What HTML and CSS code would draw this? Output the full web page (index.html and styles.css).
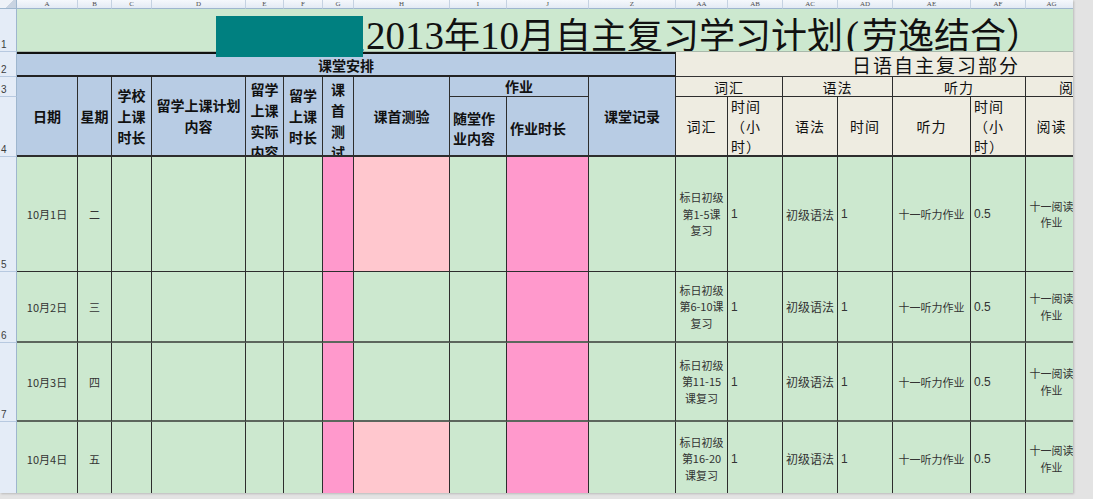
FILE: index.html
```html
<!DOCTYPE html>
<html lang="zh-CN">
<head>
<meta charset="utf-8">
<title>2013年10月自主复习学习计划</title>
<link rel="stylesheet" href="styles.css">
</head>
<body>
<div class="screen">
  <div class="sheet">
    <div class="grid">
      <!-- column headers -->
      <div class="corner"></div>
      <div class="ch">A</div><div class="ch">B</div><div class="ch">C</div><div class="ch">D</div>
      <div class="ch">E</div><div class="ch">F</div><div class="ch">G</div><div class="ch">H</div>
      <div class="ch">I</div><div class="ch">J</div><div class="ch">Z</div><div class="ch">AA</div>
      <div class="ch">AB</div><div class="ch">AC</div><div class="ch">AD</div><div class="ch">AE</div>
      <div class="ch">AF</div><div class="ch">AG</div>

      <!-- row 1 -->
      <div class="rh">1</div>
      <div class="title"><span class="title-text">某某学员<span class="num">2013</span>年<span class="num">10</span>月自主复习学习计划<span class="num paren">(</span>劳逸结合）</span></div>

      <!-- row 2 -->
      <div class="rh">2</div>
      <div class="sec-blue">课堂安排</div>
      <div class="sec-cream">日语自主复习部分</div>

      <!-- row 3 -->
      <div class="rh">3</div>
      <div class="hd rs2">日期</div>
      <div class="hd rs2">星期</div>
      <div class="hd rs2">学校<br>上课<br>时长</div>
      <div class="hd rs2">留学上课计划<br>内容</div>
      <div class="hd rs2 top">留学<br>上课<br>实际<br>内容</div>
      <div class="hd rs2">留学<br>上课<br>时长</div>
      <div class="hd rs2 top">课<br>首<br>测<br>试</div>
      <div class="hd rs2">课首测验</div>
      <div class="hd cs2 thin">作业</div>
      <div class="hd rs2">课堂记录</div>
      <div class="cr cs2">词汇</div>
      <div class="cr cs2">语法</div>
      <div class="cr cs2">听力</div>
      <div class="cr cut">阅读</div>

      <!-- row 4 -->
      <div class="rh">4</div>
      <div class="hd left">随堂作<br>业内容</div>
      <div class="hd left">作业时长</div>
      <div class="cr low">词汇</div>
      <div class="cr low left">时间<br>（小<br>时）</div>
      <div class="cr low">语法</div>
      <div class="cr low">时间</div>
      <div class="cr low">听力</div>
      <div class="cr low left">时间<br>（小<br>时）</div>
      <div class="cr low">阅读</div>

      <!-- row 5 -->
      <div class="rh">5</div>
      <div class="c">10月1日</div>
      <div class="c">二</div>
      <div class="c"></div>
      <div class="c"></div>
      <div class="c"></div>
      <div class="c"></div>
      <div class="c pink"></div>
      <div class="c lpink"></div>
      <div class="c"></div>
      <div class="c pink"></div>
      <div class="c"></div>
      <div class="c ml">标日初级<br>第1-5课<br>复习</div>
      <div class="c l">1</div>
      <div class="c l">初级语法</div>
      <div class="c l">1</div>
      <div class="c">十一听力作业</div>
      <div class="c l">0.5</div>
      <div class="c ml">十一阅读<br>作业</div>

      <!-- row 6 -->
      <div class="rh">6</div>
      <div class="c g">10月2日</div>
      <div class="c g">三</div>
      <div class="c g"></div>
      <div class="c g"></div>
      <div class="c g"></div>
      <div class="c g"></div>
      <div class="c g pink"></div>
      <div class="c g"></div>
      <div class="c g"></div>
      <div class="c g pink"></div>
      <div class="c g"></div>
      <div class="c g ml">标日初级<br>第6-10课<br>复习</div>
      <div class="c g l">1</div>
      <div class="c g l">初级语法</div>
      <div class="c g l">1</div>
      <div class="c g">十一听力作业</div>
      <div class="c g l">0.5</div>
      <div class="c g ml">十一阅读<br>作业</div>

      <!-- row 7 -->
      <div class="rh">7</div>
      <div class="c g">10月3日</div>
      <div class="c g">四</div>
      <div class="c g"></div>
      <div class="c g"></div>
      <div class="c g"></div>
      <div class="c g"></div>
      <div class="c g pink"></div>
      <div class="c g"></div>
      <div class="c g"></div>
      <div class="c g pink"></div>
      <div class="c g"></div>
      <div class="c g ml">标日初级<br>第11-15<br>课复习</div>
      <div class="c g l">1</div>
      <div class="c g l">初级语法</div>
      <div class="c g l">1</div>
      <div class="c g">十一听力作业</div>
      <div class="c g l">0.5</div>
      <div class="c g ml">十一阅读<br>作业</div>

      <!-- row 8 -->
      <div class="rh">8</div>
      <div class="c r8">10月4日</div>
      <div class="c r8">五</div>
      <div class="c r8"></div>
      <div class="c r8"></div>
      <div class="c r8"></div>
      <div class="c r8"></div>
      <div class="c r8 pink"></div>
      <div class="c r8 lpink"></div>
      <div class="c r8"></div>
      <div class="c r8 pink"></div>
      <div class="c r8"></div>
      <div class="c r8 ml">标日初级<br>第16-20<br>课复习</div>
      <div class="c r8 l">1</div>
      <div class="c r8 l">初级语法</div>
      <div class="c r8 l">1</div>
      <div class="c r8">十一听力作业</div>
      <div class="c r8 l">0.5</div>
      <div class="c r8 ml">十一阅读<br>作业</div>
    </div>
  </div>
  <div class="redact"></div>
</div>
</body>
</html>
```

FILE: styles.css
```css
html, body {
  margin: 0;
  padding: 0;
  background: #e3e3e3;
}

.screen {
  position: relative;
  width: 1093px;
  height: 499px;
  overflow: hidden;
  background: #e3e3e3;
  font-family: "Noto Sans CJK SC", sans-serif;
  color: #222;
}

.sheet {
  width: 1073px;
  height: 493px;
  overflow: hidden;
  background: #ffffff;
  box-shadow: 1px 1px 2px rgba(0, 0, 0, 0.18);
}

.grid {
  display: grid;
  grid-template-columns: 17px 61px 34px 40px 94px 38px 39px 31px 96px 57px 82px 87px 52px 55px 55px 55px 78px 55px 52px;
  grid-template-rows: 9px 43px 25px 20px 60px 115px 71px 79px 90px;
  font-size: 11px;
}

.grid > div {
  box-sizing: border-box;
  overflow: hidden;
  min-width: 0;
  min-height: 0;
}

/* column / row headers */
.corner {
  background: linear-gradient(135deg, #eef2f8 55%, #c9d4e2 55%);
  border-right: 1px solid #9eb6ce;
  border-bottom: 1px solid #9eb6ce;
}

.ch {
  background: linear-gradient(#f5f8fc, #e3eaf4);
  border-right: 1px solid #c5d2e2;
  border-bottom: 1px solid #9eb6ce;
  font-family: "Liberation Serif", serif;
  font-size: 7px;
  line-height: 8px;
  color: #4d4d4d;
  text-align: center;
}

.rh {
  background: #e4ecf7;
  border-right: 1px solid #9eb6ce;
  border-bottom: 1px solid #b7c9e0;
  font-family: "Liberation Sans", sans-serif;
  font-size: 10px;
  line-height: 10px;
  color: #3c3c3c;
  padding: 0 0 1px 1px;
  display: flex;
  align-items: flex-end;
}

/* title */
.title {
  grid-column: span 18;
  background: #cce8cf;
  border-bottom: 1px solid #a9b9ab;
  font-family: "Liberation Serif", "Noto Sans CJK SC", serif;
  font-size: 36px;
  color: #111;
  white-space: nowrap;
  padding: 12px 0 0 205px;
  display: flex;
  align-items: flex-start;
}

.title-text {
  display: block;
  line-height: 30px;
}

.title .num {
  font-family: "Liberation Serif", serif;
  font-size: 39px;
  line-height: 30px;
}

.title .paren {
  padding: 0 3px;
}

/* section headers */
.sec-blue {
  grid-column: span 11;
  background: #b8cce4;
  box-shadow: inset 0 2px 0 #111;
  border-right: 1px solid #222;
  border-bottom: 2px solid #222;
  font-size: 14px;
  font-weight: 700;
  color: #111;
  display: flex;
  align-items: center;
  justify-content: center;
  padding-top: 3px;
}

.sec-cream {
  grid-column: span 7;
  background: #eeece1;
  border-bottom: 1px solid #333;
  font-size: 19px;
  line-height: 22px;
  letter-spacing: 2px;
  color: #111;
  padding-left: 176px;
  display: flex;
  align-items: center;
  white-space: nowrap;
  padding-top: 2px;
}

/* blue headers */
.hd {
  background: #b8cce4;
  border-right: 1px solid #2d2d2d;
  border-bottom: 2px solid #2d2d2d;
  font-size: 14px;
  font-weight: 700;
  line-height: 21px;
  color: #111;
  display: flex;
  align-items: center;
  justify-content: center;
  text-align: center;
}

.hd.top {
  align-items: flex-start;
  padding-top: 2px;
}

.hd.thin {
  border-bottom: 1px solid #2d2d2d;
}

.hd.left {
  justify-content: flex-start;
  text-align: left;
  padding: 4px 0 0 3px;
  line-height: 20px;
}

.rs2 { grid-row: span 2; }
.cs2 { grid-column: span 2; }

/* cream headers */
.cr {
  background: #eeece1;
  border-right: 1px solid #2d2d2d;
  border-bottom: 1px solid #2d2d2d;
  font-size: 14px;
  line-height: 20px;
  letter-spacing: 1px;
  color: #111;
  display: flex;
  align-items: center;
  justify-content: center;
  text-align: center;
}

.cr.low {
  border-bottom: 2px solid #2d2d2d;
}

.cr.left {
  justify-content: flex-start;
  text-align: left;
  padding-left: 3px;
}

.cr.cut {
  justify-content: flex-start;
  padding-left: 33px;
  white-space: nowrap;
}

/* data cells */
.c {
  background: #cce8cf;
  border-right: 1px solid #2d2d2d;
  border-bottom: 1px solid #2d2d2d;
  color: #333;
  display: flex;
  align-items: center;
  justify-content: center;
  text-align: center;
  white-space: nowrap;
}

.c.g {
  border-bottom: 2px solid #5c665d;
}

.c.r8 {
  border-bottom: none;
  padding-bottom: 17px;
}

.c.l {
  justify-content: flex-start;
  padding-left: 3px;
  font-family: "Liberation Sans", "Noto Sans CJK SC", sans-serif;
  font-size: 12px;
}

.c.ml {
  line-height: 16.5px;
}

.pink { background: #ff99cc; }
.lpink { background: #ffc7ce; }

/* redaction block over the title */
.redact {
  position: absolute;
  left: 216px;
  top: 16px;
  width: 147px;
  height: 41px;
  background: #008080;
}
```
